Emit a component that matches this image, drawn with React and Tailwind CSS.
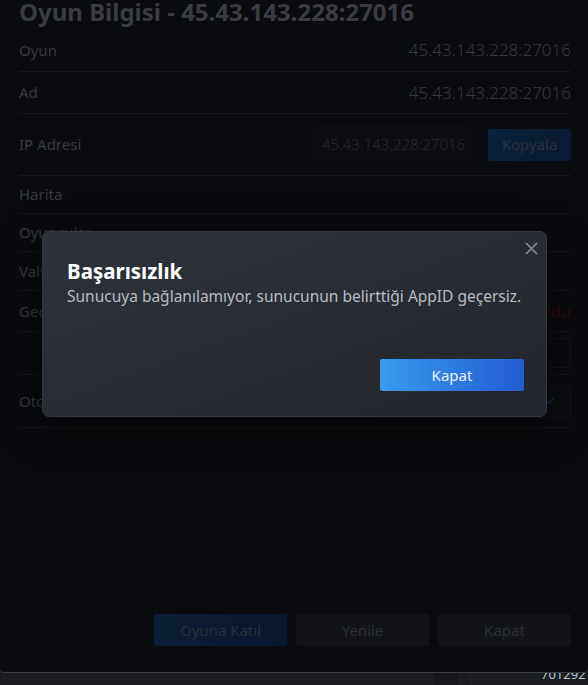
import React from 'react'

// info rows of the server dialog (drawn dimmed behind the error popup)
const rows = [
  { label: 'Oyun', value: '45.43.143.228:27016', h: 'h-[43px]' },
  { label: 'Ad', value: '45.43.143.228:27016', h: 'h-[42px]' },
]

function Row({ label, children, h }) {
  return (
    <div className={`flex items-center justify-between border-b border-[#15171a] ${h}`}>
      <span className="text-[15px] text-[#383a3e]">{label}</span>
      {children}
    </div>
  )
}

function ErrorPopup() {
  return (
    <div className="absolute left-[42px] top-[231px] w-[505px] h-[186px] rounded-[7px] border border-[#33363e] bg-gradient-to-br from-[#2e323a] to-[#22252b] shadow-[0_10px_40px_rgba(0,0,0,0.6)]">
      <button className="absolute right-[8px] top-[9px] flex h-[14px] w-[14px] items-center justify-center text-[#8a9099]">
        <svg width="13" height="13" viewBox="0 0 13 13" fill="none" stroke="currentColor" strokeWidth="1.6">
          <path d="M1 1 L12 12 M12 1 L1 12" />
        </svg>
      </button>
      <div className="flex h-full flex-col pl-[24px] pr-[22px] pt-[26px] pb-[25px]">
        <h2 className="text-[20.5px] font-bold leading-[26px] text-white">Başarısızlık</h2>
        <p className="mt-[2px] text-[15.5px] leading-[20px] text-[#b8bcc4]">
          Sunucuya bağlanılamıyor, sunucunun belirttiği AppID geçersiz.
        </p>
        <div className="mt-auto flex justify-end">
          <button className="h-[32px] w-[144px] rounded-[2px] bg-gradient-to-r from-[#3a9bec] to-[#235bd3] text-[15px] text-[#eaf2ff]">
            Kapat
          </button>
        </div>
      </div>
    </div>
  )
}

export default function App() {
  return (
    <div className="relative h-[685px] w-[588px] overflow-hidden bg-[#1b1d21] font-['Noto_Sans',sans-serif]">
      <div className="flex h-[673px] flex-col rounded-b-[4px] border-b border-[#3b3d42] bg-[#0a0b0e] pl-[19px] pr-[17px] pb-[26px]">
        <h1 className="-mt-[5px] text-[24px] font-bold leading-[34px] text-[#3a3c41]">
          Oyun Bilgisi - 45.43.143.228:27016
        </h1>

        {rows.map((r) => (
          <Row key={r.label} label={r.label} h={r.h}>
            <span className="text-[17px] font-light text-[#36383c]">{r.value}</span>
          </Row>
        ))}

        <Row label="IP Adresi" h="h-[62px]">
          <div className="flex items-center gap-[16px]">
            <div className="flex h-[41px] w-[160px] items-center rounded-[3px] bg-[#0c0d10] px-[10px] text-[15px] font-light text-[#28292d]">
              45.43.143.228:27016
            </div>
            <button className="h-[32px] w-[83px] rounded-[2px] bg-gradient-to-r from-[#0b213d] to-[#091932] text-[15px] text-[#2c333d]">
              Kopyala
            </button>
          </div>
        </Row>

        <Row label="Harita" h="h-[38px]" />
        <Row label="Oyuncular" h="h-[38px]" />
        <Row label="Valve Anti-Cheat" h="h-[39px]" />
        <Row label="Gecikme" h="h-[41px]">
          <span className="text-[17px] font-light text-[#3a0b0d]">Başarısız oldu</span>
        </Row>

        <div className="flex h-[43px] items-center justify-end border-b border-[#15171a]">
          <div className="h-[30px] w-[160px] rounded-[3px] border border-[#131519]" />
        </div>

        <Row label="Otomatik katıl" h="h-[53px]">
          <div className="flex h-[33px] w-[200px] items-center justify-end rounded-[3px] border border-[#131519] bg-[#0c0d10] pr-[15px]">
            <svg width="12" height="8" viewBox="0 0 12 8" fill="none" stroke="#0d2a45" strokeWidth="1.6">
              <path d="M1 1 L6 6 L11 1" />
            </svg>
          </div>
        </Row>

        <div className="mt-auto flex justify-end gap-[9px]">
          <button className="h-[32px] w-[133px] rounded-[2px] bg-gradient-to-r from-[#0b1d35] to-[#08172e] text-[15px] text-[#29313d]">
            Oyuna Katıl
          </button>
          <button className="h-[32px] w-[133px] rounded-[2px] bg-[#111316] text-[15px] text-[#2d3034]">
            Yenile
          </button>
          <button className="h-[32px] w-[133px] rounded-[2px] bg-[#111316] text-[15px] text-[#2d3034]">
            Kapat
          </button>
        </div>
      </div>

      {/* client status strip under the dialog */}
      <div className="flex h-[12px] items-start overflow-hidden">
        <div className="h-full w-[435px]" />
        <div className="h-full w-[22px] bg-[#16181b]" />
        <div className="h-full w-[13px]" />
        <div className="h-full border-l border-[#25272c] pl-[70px]">
          <span className="-mt-[7px] block text-[13px] leading-[16px] text-[#b8c6d4]">701292</span>
        </div>
      </div>

      <ErrorPopup />
    </div>
  )
}
